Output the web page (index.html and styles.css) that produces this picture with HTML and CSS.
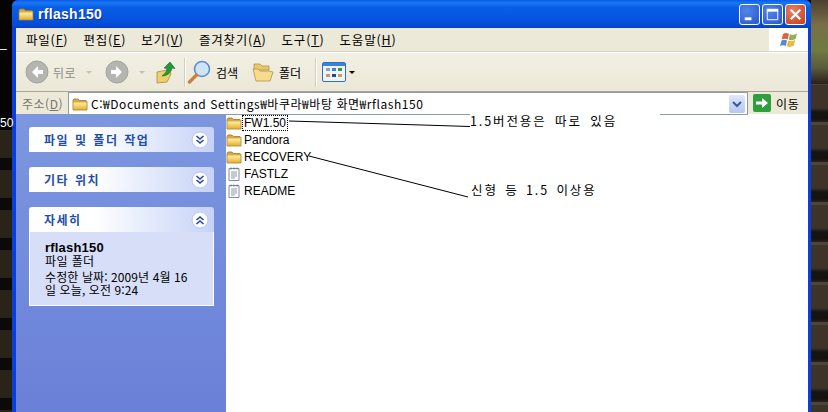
FILE: index.html
```html
<!DOCTYPE html>
<html lang="ko">
<head>
<meta charset="utf-8">
<title>rflash150</title>
<link rel="stylesheet" href="styles.css">
</head>
<body>
<svg class="defs" width="0" height="0">
  <defs>
    <linearGradient id="fg" x1="0" y1="0" x2="0" y2="1"><stop offset="0" stop-color="#fff0a8"/><stop offset="1" stop-color="#e8b030"/></linearGradient>
    <symbol id="folder" viewBox="0 0 16 16">
      <path d="M1 4.500 2 3h4l1.500 1.500H14l1 1V14H1z" fill="#d9a93f" stroke="#9a7a30" stroke-width=".8"/>
      <path d="M1.500 6.500H14.500V13.500H1.500z" fill="url(#fg)"/>
    </symbol>
    <symbol id="note" viewBox="0 0 16 16">
      <path d="M3 2.500H13V14.500H3z" fill="#fff" stroke="#7d8ba0"/>
      <path d="M5 1.500V3.500M8 1.500V3.500M11 1.500V3.500" stroke="#66758c"/>
      <path d="M5 6H11M5 8H11M5 10H11M5 12H9" stroke="#8b97aa"/>
    </symbol>
    <symbol id="chev-down" viewBox="0 0 18 18">
      <circle cx="9" cy="9" r="8" fill="#fff" stroke="#b9c6ec"/>
      <path d="M5.500 5 9 8 12.500 5M5.500 9 9 12 12.500 9" fill="none" stroke="#26489c" stroke-width="1.600"/>
    </symbol>
    <symbol id="chev-up" viewBox="0 0 18 18">
      <circle cx="9" cy="9" r="8" fill="#fff" stroke="#b9c6ec"/>
      <path d="M5.500 9 9 6 12.500 9M5.500 13 9 10 12.500 13" fill="none" stroke="#26489c" stroke-width="1.600"/>
    </symbol>
  </defs>
</svg>
<div class="desktop">
  <aside class="strip strip-left"><span class="bg-a">_</span><span class="bg-b">50</span></aside>
  <main class="window">
    <header class="titlebar">
      <svg class="ico16" viewBox="0 0 16 16"><use href="#folder"/></svg>
      <span class="title">rflash150</span>
      <div class="winbtns">
        <span class="wb"><svg viewBox="0 0 20 20"><rect x="5" y="13" width="7" height="3" fill="#fff"/></svg></span>
        <span class="wb"><svg viewBox="0 0 20 20"><path d="M4.500 5.500H15.500V15.500H4.500z" fill="none" stroke="#fff"/><rect x="4" y="4" width="12" height="3" fill="#fff"/></svg></span>
        <span class="wb wb-close"><svg viewBox="0 0 20 20"><path d="M5 5 15 15M15 5 5 15" stroke="#fff" stroke-width="2.400"/></svg></span>
      </div>
    </header>
    <div class="frame">
      <nav class="menubar">
        <div class="menus">
          <span>파일(<u>F</u>)</span>
          <span>편집(<u>E</u>)</span>
          <span>보기(<u>V</u>)</span>
          <span>즐겨찾기(<u>A</u>)</span>
          <span>도구(<u>T</u>)</span>
          <span>도움말(<u>H</u>)</span>
        </div>
        <div class="flag">
          <svg viewBox="0 0 20 20" width="20" height="20">
            <path d="M4 4Q7 2 10 4L8.500 9.500Q6 8 2.800 9.500z" fill="#e0613c"/>
            <path d="M11 4Q14 6 18 3.500L16.500 9Q13 11 9.500 9.500z" fill="#8db25a"/>
            <path d="M2.500 10.500Q5.500 9 8 10.500L6.800 16Q4 14.500 1 16z" fill="#4e8cd8"/>
            <path d="M9.200 10.500Q12.500 12 16.200 10L14.800 15.500Q11 18 7.800 16z" fill="#eeb83c"/>
          </svg>
        </div>
      </nav>
      <div class="toolbar">
        <span class="tool tool-back">
          <svg class="round" viewBox="0 0 24 24"><circle cx="12" cy="12" r="11" fill="#b4b4b0" stroke="#a2a29e"/><path d="M13 6 7 12l6 6v-4h5v-4h-5z" fill="#fff"/></svg>
          <span class="muted">뒤로</span><i class="caret muted-caret"></i>
        </span>
        <span class="tool tool-fwd">
          <svg class="round" viewBox="0 0 24 24"><circle cx="12" cy="12" r="11" fill="#b4b4b0" stroke="#a2a29e"/><path d="M11 6l6 6-6 6v-4H6v-4h5z" fill="#fff"/></svg>
          <i class="caret muted-caret"></i>
        </span>
        <svg class="tool-up" viewBox="0 0 24 24" width="24" height="24">
          <path d="M3 12l10-2 3 1 1 3-4 8-10 1z" fill="#edcf6c" stroke="#a88a3a" stroke-width=".8"/>
          <path d="M16 2 10 8l3 .5C13 11 11 14 8 16c5 0 9-3 10-8l3 .5z" fill="#26963a" stroke="#176d28" stroke-width=".6"/>
        </svg>
        <i class="sep"></i>
        <span class="tool tool-search">
          <svg viewBox="0 0 24 24" width="24" height="24"><circle cx="15" cy="9" r="7.500" fill="#cfe4fa" stroke="#5c8fc8" stroke-width="1.600"/><path d="M9.500 15 2.500 22" stroke="#c8803c" stroke-width="3.200" stroke-linecap="round"/></svg>
          <span>검색</span>
        </span>
        <span class="tool tool-folders">
          <svg viewBox="0 0 24 24" width="24" height="24"><path d="M3 4h6l2 2h7v4H3z" fill="#e8c86a" stroke="#b09445" stroke-width=".8"/><path d="M2 9h5l2 2h9l4 1-3 9H5z" fill="#f6dc8c" stroke="#b09445" stroke-width=".8"/></svg>
          <span>폴더</span>
        </span>
        <i class="sep"></i>
        <span class="tool tool-views">
          <svg viewBox="0 0 24 20" width="24" height="20">
            <rect x=".5" y=".5" width="23" height="19" rx="1.500" fill="#eef4fc" stroke="#2d70c4"/>
            <rect x="1" y="1" width="22" height="3" fill="#3a83d8"/>
            <rect x="4" y="6" width="4" height="3" fill="#8f9fc4"/><rect x="10" y="6" width="4" height="3" fill="#4a80c8"/><rect x="16" y="6" width="4" height="3" fill="#2e9a46"/>
            <rect x="4" y="12" width="4" height="3" fill="#d8926a"/><rect x="10" y="12" width="4" height="3" fill="#274a86"/><rect x="16" y="12" width="4" height="3" fill="#c8a05a"/>
          </svg>
          <i class="caret"></i>
        </span>
      </div>
      <div class="addressbar">
        <label class="addr-label">주소(<u>D</u>)</label>
        <div class="addr-field">
          <svg class="ico16" viewBox="0 0 16 16"><use href="#folder"/></svg>
          <span class="addr-text">C:₩Documents and Settings₩바쿠라₩바탕 화면₩rflash150</span>
          <span class="addr-drop"><svg viewBox="0 0 16 16" width="16" height="16"><path d="M4 6l4 4 4-4" fill="none" stroke="#3b5a9a" stroke-width="2"/></svg></span>
        </div>
        <span class="go">
          <svg viewBox="0 0 18 18" width="18" height="18"><rect width="18" height="18" rx="2" fill="#2f9e3c"/><path d="M3 7.500h6V4l6 5-6 5v-3.500H3z" fill="#fff"/></svg>
          <span>이동</span>
        </span>
      </div>
      <div class="content">
        <aside class="sidebar">
          <section class="panel">
            <div class="panel-head"><h2>파일 및 폴더 작업</h2><svg class="chev"><use href="#chev-down"/></svg></div>
          </section>
          <section class="panel">
            <div class="panel-head"><h2>기타 위치</h2><svg class="chev"><use href="#chev-down"/></svg></div>
          </section>
          <section class="panel">
            <div class="panel-head"><h2>자세히</h2><svg class="chev"><use href="#chev-up"/></svg></div>
            <div class="panel-body">
              <strong>rflash150</strong>
              <span>파일 폴더</span>
              <p>수정한 날짜: 2009년 4월 16일 오늘, 오전 9:24</p>
            </div>
          </section>
        </aside>
        <section class="files">
          <ul class="filelist">
            <li><svg class="ico16"><use href="#folder"/></svg><span class="sel">FW1.50</span></li>
            <li><svg class="ico16"><use href="#folder"/></svg><span>Pandora</span></li>
            <li><svg class="ico16"><use href="#folder"/></svg><span>RECOVERY</span></li>
            <li><svg class="ico16"><use href="#note"/></svg><span>FASTLZ</span></li>
            <li><svg class="ico16"><use href="#note"/></svg><span>README</span></li>
          </ul>
          <svg class="marks" width="582" height="298" viewBox="0 0 582 298">
            <path d="M63 7 196 11 244 12.500" fill="none" stroke="#000"/>
            <path d="M83 42 242 83" fill="none" stroke="#000"/>
          </svg>
          <span class="note note-1">1.5버전용은 따로 있음</span>
          <span class="note note-2">신형 등 1.5 이상용</span>
        </section>
      </div>
    </div>
  </main>
  <aside class="strip strip-right"></aside>
</div>
</body>
</html>
```
FILE: styles.css
```css
* { box-sizing: border-box; }
html, body { margin: 0; padding: 0; }
body {
  width: 828px;
  height: 412px;
  overflow: hidden;
  font-family: "Noto Sans CJK KR", "Liberation Sans", sans-serif;
  font-size: 12px;
  color: #000;
  background: #000;
}
.defs { position: absolute; }
.desktop { display: flex; width: 828px; height: 412px; }
.strip { flex: none; position: relative; }
.strip-left {
  width: 12px;
  color: #fff;
  font: 12px/14px "Liberation Sans", sans-serif;
  background:
    repeating-linear-gradient(180deg, #2a2418 0 28px, #0c0a06 28px 40px) 0 130px / 100% 282px no-repeat,
    #050403;
}
.bg-a { position: absolute; left: 0; top: 36px; }
.bg-b { position: absolute; left: 0; top: 116px; }
.strip-right {
  width: 17px;
  background:
    linear-gradient(180deg, #4a4030 0, #7a6e48 25px, #6f7a40 50px, #5c5a3c 68px, #2a2018 84px) 0 0 / 100% 84px no-repeat,
    repeating-linear-gradient(180deg, #4e4538 0 3px, #3e3328 3px 26px, #171310 30px 37px, #2a2420 40px) 0 82px;
}
.window {
  flex: none;
  width: 799px;
  height: 412px;
  display: flex;
  flex-direction: column;
  background: #0a3ed8;
  border-radius: 6px 6px 0 0;
  overflow: hidden;
}
.titlebar {
  flex: none;
  height: 28px;
  display: flex;
  align-items: center;
  padding: 0 5px 0 6px;
  gap: 4px;
  background: linear-gradient(180deg, #0a5ae8 0, #1a78f4 3px, #0a5fe6 7px, #0455e0 18px, #0548d4 26px, #0340bc 28px);
}
.ico16 { width: 16px; height: 16px; flex: none; }
.title {
  color: #fff;
  font: bold 14px/16px "Liberation Sans", sans-serif;
  letter-spacing: .3px;
  text-shadow: 1px 1px 0 #0f2f90;
}
.winbtns { margin-left: auto; display: flex; gap: 2px; }
.wb {
  width: 21px;
  height: 21px;
  border: 1px solid #fff;
  border-radius: 3px;
  background: radial-gradient(circle at 35% 30%, #4f86ea, #2a55cc);
  display: block;
}
.wb svg { display: block; width: 19px; height: 19px; }
.wb-close { background: radial-gradient(circle at 35% 30%, #e8805e, #c43d1c); }
.frame {
  flex: 1;
  margin: 0 3px 0 4px;
  display: flex;
  flex-direction: column;
  min-height: 0;
  background: #ece9d8;
}
.menubar {
  flex: none;
  height: 24px;
  display: flex;
  justify-content: space-between;
  border-bottom: 1px solid #d8d4c4;
  box-shadow: 0 1px 0 #fff;
  position: relative;
}
.menus {
  display: flex;
  align-items: center;
  gap: 15px;
  padding-left: 10px;
  line-height: 20px;
  font-size: 12.500px;
  letter-spacing: .8px;
}
.menus u, .addr-label u { text-decoration: underline; }
.flag {
  width: 39px;
  background: #fff;
  display: flex;
  align-items: center;
  justify-content: center;
}
.toolbar {
  flex: none;
  height: 39px;
  display: flex;
  align-items: center;
  padding-left: 9px;
  border-bottom: 1px solid #a8a698;
  background: linear-gradient(180deg, #f2f0e4, #ebe8d8);
  margin-top: 1px;
}
.tool { display: flex; align-items: center; gap: 4px; flex: none; }
.round { width: 24px; height: 24px; flex: none; }
.muted { color: #8c8c88; letter-spacing: .5px; }
.caret {
  display: block;
  width: 0;
  height: 0;
  border: 3px solid transparent;
  border-top: 3px solid #000;
  border-bottom: 0;
}
.muted-caret { border-top-color: #c0c0bc; margin-left: 6px; }
.tool-back { width: 80px; }
.tool-fwd { width: 49px; }
.tool-up { flex: none; }
.sep { flex: none; display: block; width: 1px; height: 29px; background: #d2cfbe; box-shadow: 1px 0 0 #fff; margin: 0 6px 0 6px; }
.tool-search { width: 64px; gap: 5px; margin-left: -4px; }
.tool-folders { width: 58px; gap: 4px; }
.tool-views { gap: 3px; }
.addressbar {
  flex: none;
  height: 22px;
  display: flex;
  align-items: center;
  align-self: stretch;
  background: #ece9d8;
}
.addr-label { width: 52px; padding-left: 6px; color: #77766c; flex: none; font-size: 12px; letter-spacing: .5px; }
.addr-field {
  position: relative;
  width: 680px;
  height: 23px;
  margin-top: 1px;
  flex: none;
  display: flex;
  align-items: center;
  gap: 3px;
  padding: 0 2px 0 3px;
  background: #fff;
  border: 1px solid #8d9aa8;
}
.addr-text { font: 12px/16px "Noto Sans CJK KR", sans-serif; white-space: nowrap; flex: 1; letter-spacing: .55px; }
.addr-drop {
  width: 16px;
  height: 18px;
  border-radius: 2px;
  background: linear-gradient(180deg, #dfe8fb, #b5c8f0);
  display: block;
}
.addr-drop svg { display: block; margin-top: 1px; }
.go { display: flex; align-items: center; gap: 5px; padding-left: 5px; font-size: 12px; letter-spacing: .8px; }
.go svg { flex: none; }
.content { flex: 1; display: flex; min-height: 0; background: #fff; }
.sidebar {
  flex: none;
  width: 210px;
  padding: 13px 12px 0 13px;
  display: flex;
  flex-direction: column;
  gap: 15px;
  background: linear-gradient(180deg, #7c97e0, #6a80d8);
}
.panel-head {
  height: 25px;
  display: flex;
  align-items: center;
  justify-content: space-between;
  padding: 0 5px 0 15px;
  border-radius: 3px 3px 0 0;
  background: linear-gradient(90deg, #fff 0, #fff 35%, #c6d3f7 100%);
}
.panel-head h2 {
  margin: 0;
  font-size: 12px;
  font-weight: 700;
  color: #1f4ea8;
  letter-spacing: 1.500px;
  word-spacing: 1px;
}
.chev { width: 18px; height: 18px; flex: none; }
.panel-body {
  height: 74px;
  padding: 9px 22px 0 15px;
  background: #d6dff7;
  border: 1px solid #fff;
  border-top: 0;
  font-size: 12px;
  line-height: 13px;
}
.panel-body strong {
  display: block;
  font: bold 13px/13px "Liberation Sans", sans-serif;
  letter-spacing: .2px;
}
.panel-body span { display: block; letter-spacing: .4px; }
.panel-body p { margin: 3px 0 0; line-height: 13px; word-break: break-all; font-size: 12px; letter-spacing: .1px; }
.files { flex: 1; position: relative; min-width: 0; }
.filelist { list-style: none; margin: 0; padding: 0; position: relative; }
.filelist li { height: 17px; display: flex; align-items: center; gap: 1px; font: 12px/14px "Liberation Sans", sans-serif; }
.filelist li span { padding: 0 1px; }
.sel { outline: 1px dotted #000; outline-offset: 0; }
.marks { position: absolute; left: 0; top: 0; }
.note {
  position: absolute;
  font: 12.500px/16px "Noto Sans CJK KR", sans-serif;
  letter-spacing: 1.900px;
  word-spacing: 3px;
  white-space: nowrap;
  background: #fff;
}
.note-1 { left: 244px; top: -1px; padding: 0 43px 2px 0; }
.note-2 { left: 245px; top: 68px; word-spacing: 2px; }
```
